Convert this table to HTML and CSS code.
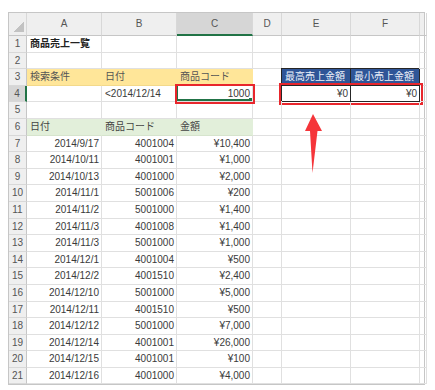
FILE: index.html
```html
<!DOCTYPE html>
<html lang="ja">
<head>
  <meta charset="UTF-8" />
  <title>商品売上一覧</title>
  <link rel="stylesheet" href="styles.css">
</head>
<body>
  <div class="sheet">
    <div class="row hd">
      <div class="c corner"><span class="tri"></span></div>
      <div class="c">A</div><div class="c">B</div><div class="c sel-col">C</div>
      <div class="c">D</div><div class="c">E</div><div class="c">F</div><div class="c"></div>
    </div>
    <div class="row">
      <div class="c n">1</div><div class="c title">商品売上一覧</div><div class="c"></div><div class="c"></div>
      <div class="c"></div><div class="c"></div><div class="c"></div><div class="c"></div>
    </div>
    <div class="row">
      <div class="c n">2</div><div class="c"></div><div class="c"></div><div class="c"></div>
      <div class="c"></div><div class="c"></div><div class="c"></div><div class="c"></div>
    </div>
    <div class="row">
      <div class="c n">3</div><div class="c yl">検索条件</div><div class="c yl">日付</div><div class="c yl">商品コード</div>
      <div class="c"></div>
      <div class="pair"><div class="c blue">最高売上金額</div><div class="c blue">最小売上金額</div></div>
      <div class="c"></div>
    </div>
    <div class="row">
      <div class="c n sel-row">4</div><div class="c"></div><div class="c">&lt;2014/12/14</div>
      <div class="c r active">1000<span class="handle"></span></div>
      <div class="c"></div>
      <div class="pair mark"><div class="c r">¥0</div><div class="c r">¥0</div></div>
      <div class="c"></div>
    </div>
    <div class="row">
      <div class="c n">5</div><div class="c"></div><div class="c"></div><div class="c"></div>
      <div class="c"></div><div class="c"></div><div class="c"></div><div class="c"></div>
    </div>
    <div class="row">
      <div class="c n">6</div><div class="c gr">日付</div><div class="c gr">商品コード</div><div class="c gr">金額</div>
      <div class="c"></div><div class="c"></div><div class="c"></div><div class="c"></div>
    </div>
    <div class="row">
      <div class="c n">7</div><div class="c r">2014/9/17</div><div class="c r">4001004</div><div class="c r">¥10,400</div>
      <div class="c"></div><div class="c"></div><div class="c"></div><div class="c"></div>
    </div>
    <div class="row">
      <div class="c n">8</div><div class="c r">2014/10/11</div><div class="c r">4001001</div><div class="c r">¥1,000</div>
      <div class="c"></div><div class="c"></div><div class="c"></div><div class="c"></div>
    </div>
    <div class="row">
      <div class="c n">9</div><div class="c r">2014/10/13</div><div class="c r">4001000</div><div class="c r">¥2,000</div>
      <div class="c"></div><div class="c"></div><div class="c"></div><div class="c"></div>
    </div>
    <div class="row">
      <div class="c n">10</div><div class="c r">2014/11/1</div><div class="c r">5001006</div><div class="c r">¥200</div>
      <div class="c"></div><div class="c"></div><div class="c"></div><div class="c"></div>
    </div>
    <div class="row">
      <div class="c n">11</div><div class="c r">2014/11/2</div><div class="c r">5001000</div><div class="c r">¥1,400</div>
      <div class="c"></div><div class="c"></div><div class="c"></div><div class="c"></div>
    </div>
    <div class="row">
      <div class="c n">12</div><div class="c r">2014/11/3</div><div class="c r">4001008</div><div class="c r">¥1,400</div>
      <div class="c"></div><div class="c"></div><div class="c"></div><div class="c"></div>
    </div>
    <div class="row">
      <div class="c n">13</div><div class="c r">2014/11/3</div><div class="c r">5001000</div><div class="c r">¥1,000</div>
      <div class="c"></div><div class="c"></div><div class="c"></div><div class="c"></div>
    </div>
    <div class="row">
      <div class="c n">14</div><div class="c r">2014/12/1</div><div class="c r">4001004</div><div class="c r">¥500</div>
      <div class="c"></div><div class="c"></div><div class="c"></div><div class="c"></div>
    </div>
    <div class="row">
      <div class="c n">15</div><div class="c r">2014/12/2</div><div class="c r">4001510</div><div class="c r">¥2,400</div>
      <div class="c"></div><div class="c"></div><div class="c"></div><div class="c"></div>
    </div>
    <div class="row">
      <div class="c n">16</div><div class="c r">2014/12/10</div><div class="c r">5001000</div><div class="c r">¥5,000</div>
      <div class="c"></div><div class="c"></div><div class="c"></div><div class="c"></div>
    </div>
    <div class="row">
      <div class="c n">17</div><div class="c r">2014/12/11</div><div class="c r">4001510</div><div class="c r">¥500</div>
      <div class="c"></div><div class="c"></div><div class="c"></div><div class="c"></div>
    </div>
    <div class="row">
      <div class="c n">18</div><div class="c r">2014/12/12</div><div class="c r">5001000</div><div class="c r">¥7,000</div>
      <div class="c"></div><div class="c"></div><div class="c"></div><div class="c"></div>
    </div>
    <div class="row">
      <div class="c n">19</div><div class="c r">2014/12/14</div><div class="c r">4001001</div><div class="c r">¥26,000</div>
      <div class="c"></div><div class="c"></div><div class="c"></div><div class="c"></div>
    </div>
    <div class="row">
      <div class="c n">20</div><div class="c r">2014/12/15</div><div class="c r">4001001</div><div class="c r">¥100</div>
      <div class="c"></div><div class="c"></div><div class="c"></div><div class="c"></div>
    </div>
    <div class="row">
      <div class="c n">21</div><div class="c r">2014/12/16</div><div class="c r">4001000</div><div class="c r">¥4,000</div>
      <div class="c"></div><div class="c"></div><div class="c"></div><div class="c"></div>
    </div>
  </div>

  <!-- annotation arrow pointing at the result cells -->
  <svg class="arrow" width="435" height="390" viewBox="0 0 435 390">
    <path d="M313 114 L322 131 L317.5 131 L312.5 173 L310 131 L305 131 Z" fill="#f5353a"/>
  </svg>
</body>
</html>
```

FILE: styles.css
```css
* { box-sizing: border-box; }
body {
  margin: 0;
  padding: 12px 0 0 8px;
  background: #fff;
  font-family: "Liberation Sans", "Noto Sans CJK JP", sans-serif;
  position: relative;
  width: 435px; height: 390px; overflow: hidden;
}
.sheet {
  width: 417px;
  border: 1px solid #c6c6c6;
  font-size: 10px; color: #3a3a3a;
}
.row {
  display: grid;
  grid-template-columns: 18px 75px 75px 76px 29px 69px 69px 1fr;
  height: 16.6px;
}
.row.hd { height: 23px; background: #efefef; }
.c {
  border-right: 1px solid #e0e0e0; border-bottom: 1px solid #e0e0e0;
  padding: 0 3px; line-height: 15.6px;
  white-space: nowrap; overflow: hidden;
}
.hd .c {
  text-align: center; line-height: 22px; color: #555;
  border-right-color: #d8d8d8; border-bottom-color: #c6c6c6;
}
.hd .sel-col { background: #d6d6d6; border-bottom: 2px solid #217346; }
.corner {
  display: flex; align-items: flex-end; justify-content: flex-end;
  padding: 0 2px 3px 0;
}
.tri {
  width: 10px; height: 10px;
  background: linear-gradient(135deg, transparent 50%, #c2c2c2 50%);
}
.n {
  background: #efefef; color: #555; text-align: center; padding: 0;
  border-right-color: #c6c6c6; border-bottom-color: #d8d8d8;
}
.n.sel-row { background: #d6d6d6; border-right: 2px solid #217346; }
.r { text-align: right; padding-right: 2px; }
.title { font-weight: bold; color: #222; }
.yl { background: #ffe699; border-right-color: #ffe699; border-bottom-color: #f3d98a; color: #555; }
.gr { background: #e2efda; border-right-color: #e2efda; border-bottom-color: #d6e4cd; color: #444; }
.pair {
  grid-column: span 2;
  display: grid; grid-template-columns: 69px 69px;
  box-shadow: -1px -1px 0 #262626;
}
.pair .c { border-color: #262626; }
.blue { background: #2f5597; color: #eef2fa; }
.mark { outline: 2px solid #e8262c; outline-offset: 1px; }
.active {
  position: relative;
  outline: 2px solid #e8262c;
  box-shadow: inset 1px 0 0 #217346, inset 0 -2px 0 #217346;
}
.handle {
  position: absolute; right: -1px; bottom: -1px;
  width: 4px; height: 4px; background: #217346;
}
.arrow { position: absolute; left: 0; top: 0; pointer-events: none; }
```
